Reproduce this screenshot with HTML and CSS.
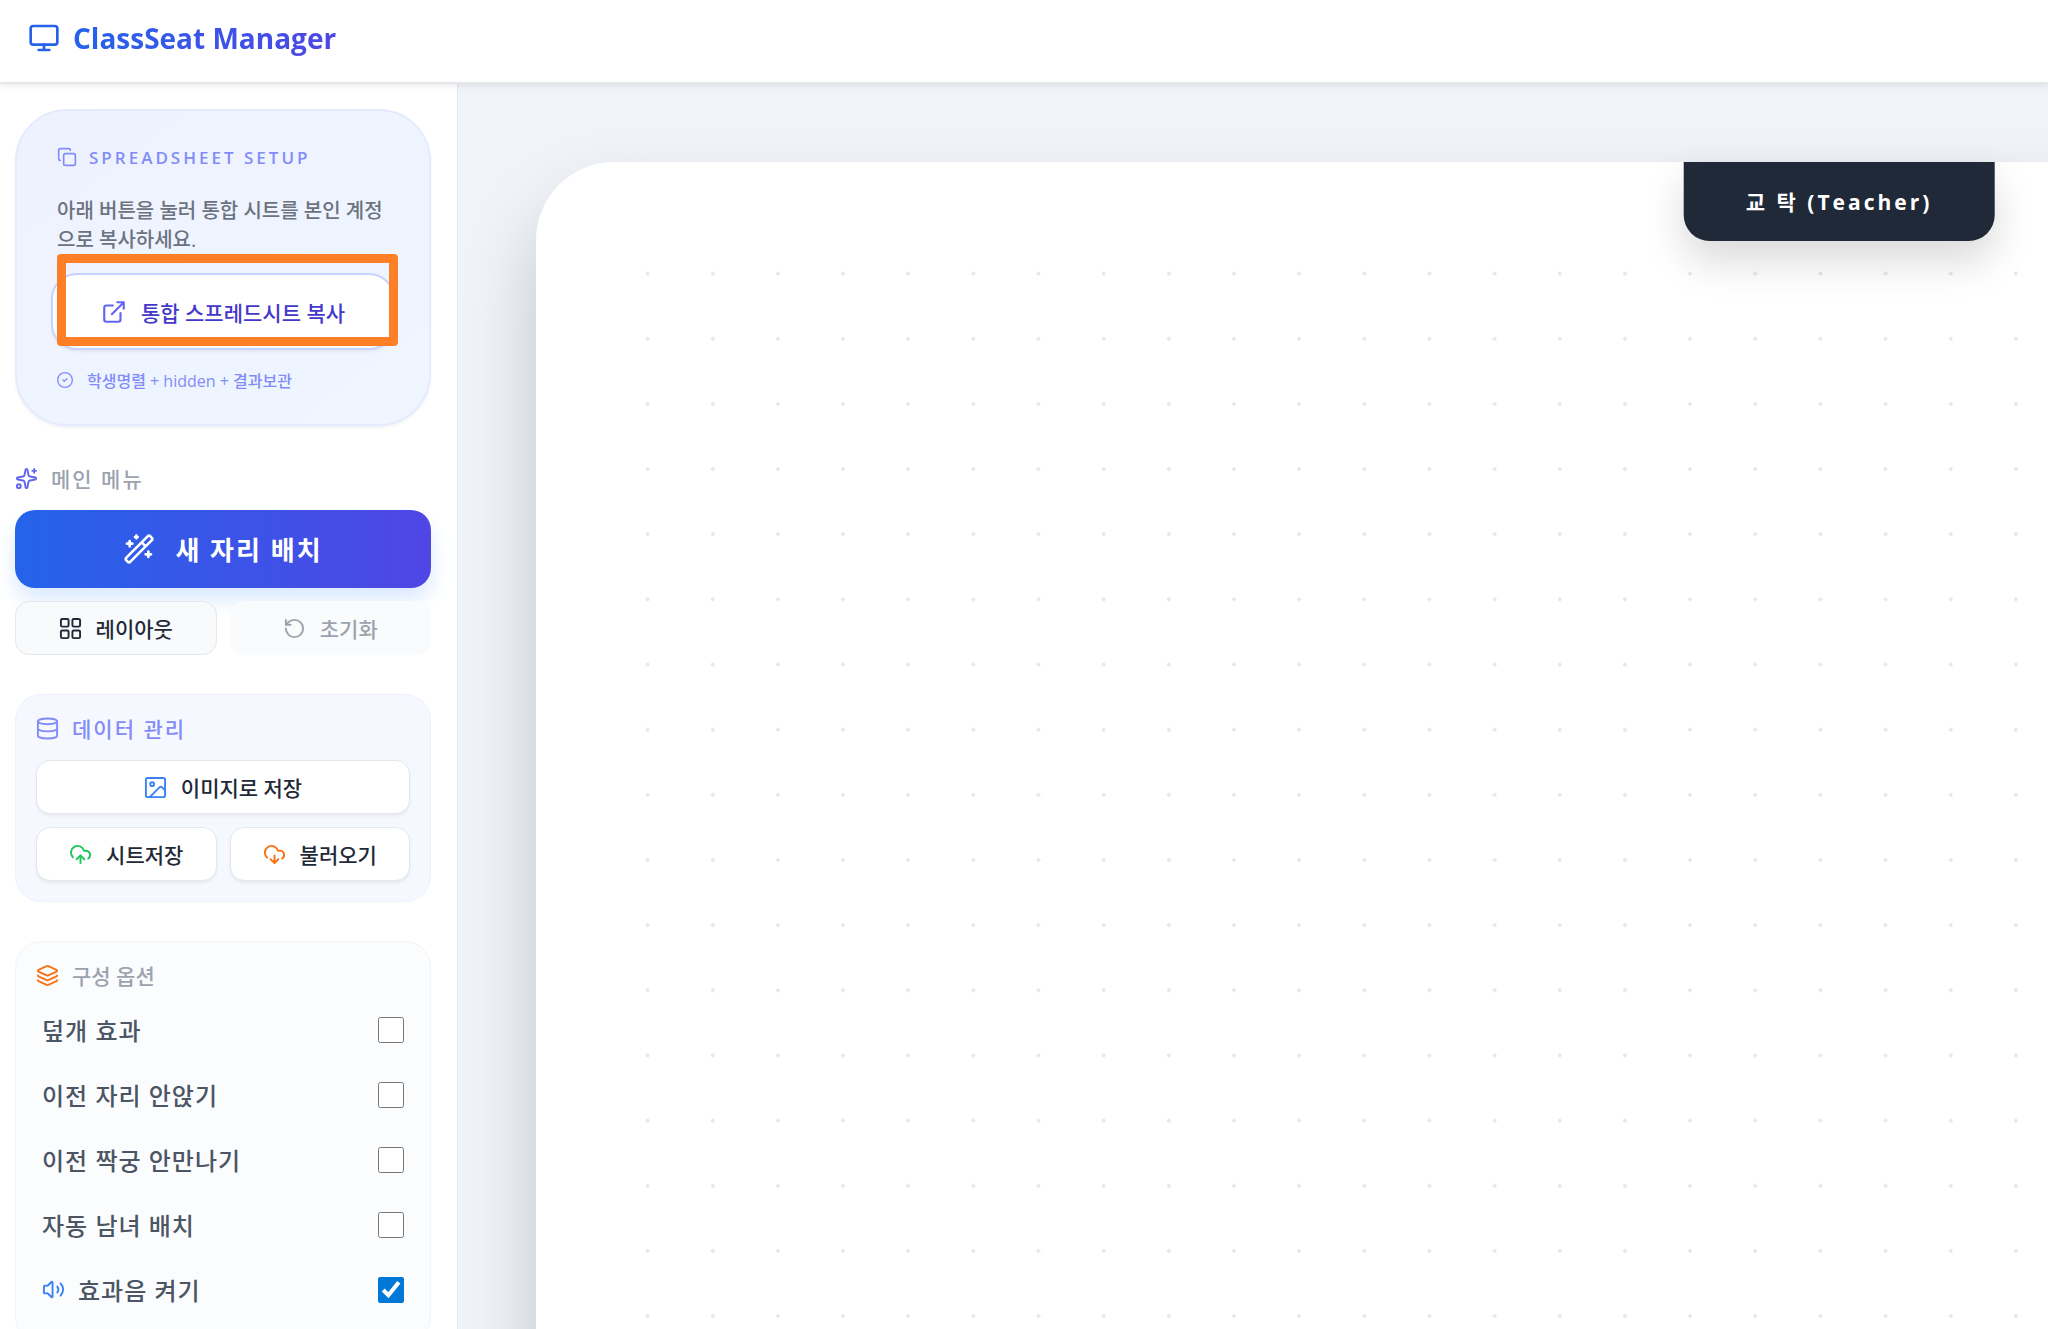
FILE: index.html
```html
<!DOCTYPE html>
<html lang="ko">
<head>
    <meta charset="UTF-8">
    <meta name="viewport" content="width=device-width, initial-scale=1.0">
    <title>ClassSeat Manager</title>
    <link rel="stylesheet" href="styles.css">
</head>
<body>
    <header class="header">
        <svg class="icon icon-logo" viewBox="0 0 24 24"><rect x="2" y="3" width="20" height="14" rx="2"/><path d="M8 21h8M12 17v4"/></svg>
        <h1 class="title">ClassSeat Manager</h1>
    </header>

    <div class="layout">
        <aside class="sidebar">
            <section class="setup-card">
                <h2 class="setup-title">
                    <svg class="icon icon-sm" viewBox="0 0 24 24"><rect x="8" y="8" width="14" height="14" rx="2"/><path d="M4 16c-1.1 0-2-.9-2-2V4c0-1.1.9-2 2-2h10c1.1 0 2 .9 2 2"/></svg>
                    SPREADSHEET SETUP
                </h2>
                <p class="setup-text">아래 버튼을 눌러 통합 시트를 본인 계정으로 복사하세요.</p>
                <div class="copy-wrap">
                    <button class="copy-button" type="button">
                        <svg class="icon icon-lg" viewBox="0 0 24 24"><path d="M15 3h6v6M10 14 21 3M18 13v6a2 2 0 0 1-2 2H5a2 2 0 0 1-2-2V8a2 2 0 0 1 2-2h6"/></svg>
                        통합 스프레드시트 복사
                    </button>
                    <div class="highlight"></div>
                </div>
                <p class="setup-note">
                    <svg class="icon icon-xs" viewBox="0 0 24 24"><circle cx="12" cy="12" r="11"/><path d="m9 12 2 2 4-4"/></svg>
                    학생명렬 + hidden + 결과보관
                </p>
            </section>

            <section class="menu">
                <h2 class="section-title">
                    <svg class="icon icon-md icon-indigo" viewBox="0 0 24 24"><path d="M11.017 2.814a1 1 0 0 1 1.966 0l1.051 5.558a2 2 0 0 0 1.594 1.594l5.558 1.051a1 1 0 0 1 0 1.966l-5.558 1.051a2 2 0 0 0-1.594 1.594l-1.051 5.558a1 1 0 0 1-1.966 0l-1.051-5.558a2 2 0 0 0-1.594-1.594l-5.558-1.051a1 1 0 0 1 0-1.966l5.558-1.051a2 2 0 0 0 1.594-1.594z"/><path d="M20 2v4M22 4h-4"/><circle cx="4" cy="20" r="2"/></svg>
                    메인 메뉴
                </h2>
                <button class="primary-button" type="button">
                    <svg class="icon icon-xl" viewBox="0 0 24 24"><path d="m21.64 3.64-1.28-1.28a1.21 1.21 0 0 0-1.72 0L2.36 18.64a1.21 1.21 0 0 0 0 1.72l1.28 1.28a1.2 1.2 0 0 0 1.72 0L21.64 5.36a1.2 1.2 0 0 0 0-1.72M14 7l3 3M5 6v4M19 14v4M10 2v2M7 8H3M21 16h-4M11 3H9"/></svg>
                    새 자리 배치
                </button>
                <div class="button-row">
                    <button class="button button-plain" type="button">
                        <svg class="icon icon-md" viewBox="0 0 24 24"><rect x="2" y="2" width="8" height="8" rx="1.5"/><rect x="14" y="2" width="8" height="8" rx="1.5"/><rect x="14" y="14" width="8" height="8" rx="1.5"/><rect x="2" y="14" width="8" height="8" rx="1.5"/></svg>
                        레이아웃
                    </button>
                    <button class="button button-reset" type="button">
                        <svg class="icon icon-md" viewBox="0 0 24 24"><path d="M3 12a9 9 0 1 0 9-9 9.75 9.75 0 0 0-6.74 2.74L3 8"/><path d="M3 3v5h5"/></svg>
                        초기화
                    </button>
                </div>
            </section>

            <section class="card card-data">
                <h2 class="section-title title-indigo">
                    <svg class="icon icon-md" viewBox="0 0 24 24"><ellipse cx="12" cy="4.5" rx="10" ry="3"/><path d="M2 4.5v15c0 1.7 4.5 3 10 3s10-1.3 10-3v-15M2 12c0 1.7 4.5 3 10 3s10-1.3 10-3"/></svg>
                    데이터 관리
                </h2>
                <button class="button button-white" type="button">
                    <svg class="icon icon-md icon-blue" viewBox="0 0 24 24"><rect x="2" y="2" width="20" height="20" rx="2"/><circle cx="8.5" cy="8.5" r="2"/><path d="m22 15-3.1-3.1a2 2 0 0 0-2.8 0L6 22"/></svg>
                    이미지로 저장
                </button>
                <div class="button-row">
                    <button class="button button-white" type="button">
                        <svg class="icon icon-md icon-green" viewBox="0 0 24 24"><path d="M12 13v8"/><path d="M4 14.9A7 7 0 1 1 15.71 8h1.79a4.5 4.5 0 0 1 2.5 8.24"/><path d="m8 17 4-4 4 4"/></svg>
                        시트저장
                    </button>
                    <button class="button button-white" type="button">
                        <svg class="icon icon-md icon-orange" viewBox="0 0 24 24"><path d="M12 13v8l-4-4M12 21l4-4"/><path d="M4.39 15.27A7 7 0 1 1 15.71 8h1.79a4.5 4.5 0 0 1 2.44 8.29"/></svg>
                        불러오기
                    </button>
                </div>
            </section>

            <section class="card card-options">
                <h2 class="section-title title-tight">
                    <svg class="icon icon-md icon-orange" viewBox="0 0 24 24"><path d="M12.83 2.18a2 2 0 0 0-1.66 0L2.6 6.08a1 1 0 0 0 0 1.83l8.58 3.91a2 2 0 0 0 1.66 0l8.58-3.9a1 1 0 0 0 0-1.83z"/><path d="M2 12a1 1 0 0 0 .58.91l8.6 3.91a2 2 0 0 0 1.65 0l8.58-3.9A1 1 0 0 0 22 12"/><path d="M2 17a1 1 0 0 0 .58.91l8.6 3.91a2 2 0 0 0 1.65 0l8.58-3.9A1 1 0 0 0 22 17"/></svg>
                    구성 옵션
                </h2>
                <label class="option">덮개 효과 <input type="checkbox"></label>
                <label class="option">이전 자리 안앉기 <input type="checkbox"></label>
                <label class="option">이전 짝궁 안만나기 <input type="checkbox"></label>
                <label class="option">자동 남녀 배치 <input type="checkbox"></label>
                <label class="option">
                    <span class="option-name">
                        <svg class="icon icon-md icon-blue" viewBox="0 0 24 24"><path d="M11 4.7a.7.7 0 0 0-1.2-.5L6.4 7.6A1.4 1.4 0 0 1 5.4 8H3a1 1 0 0 0-1 1v6a1 1 0 0 0 1 1h2.4a1.4 1.4 0 0 1 1 .4l3.4 3.4a.7.7 0 0 0 1.2-.5zM16 9a5 5 0 0 1 0 6M19.4 18.4a9 9 0 0 0 0-12.7"/></svg>
                        효과음 켜기
                    </span>
                    <input type="checkbox" checked>
                </label>
            </section>
        </aside>

        <main class="main">
            <div class="board">
                <div class="teacher">교 탁 (Teacher)</div>
                <div class="seats"></div>
            </div>
        </main>
    </div>
</body>
</html>
```
FILE: styles.css
```css
* {
    box-sizing: border-box;
}
body {
    display: flex;
    flex-direction: column;
    height: 100vh;
    margin: 0;
    overflow: hidden;
    font-family: "Open Sans", "Noto Sans CJK KR", sans-serif;
    font-weight: 500;
    color: #1f2937;
    background-color: #f0f4f8;
}
h1, h2, p {
    margin: 0;
}
button {
    font-family: inherit;
    font-weight: inherit;
    cursor: pointer;
}

/* Icons */
.icon {
    flex: none;
    fill: none;
    stroke: currentColor;
    stroke-width: 2;
    stroke-linecap: round;
    stroke-linejoin: round;
}
.icon-xs {
    width: 16px;
    height: 16px;
}
.icon-sm {
    width: 20px;
    height: 20px;
}
.icon-md {
    width: 23px;
    height: 23px;
}
.icon-lg {
    width: 26px;
    height: 26px;
}
.icon-xl {
    width: 32px;
    height: 32px;
}
.icon-logo {
    width: 32px;
    height: 32px;
    color: #2563eb;
}
.icon-indigo { color: #6366f1; }
.icon-blue { color: #3b82f6; }
.icon-green { color: #22c55e; }
.icon-orange { color: #f97316; }

/* Header */
.header {
    position: relative;
    z-index: 1;
    display: flex;
    flex: none;
    align-items: center;
    gap: 13px;
    height: 84px;
    padding: 0 28px 6px;
    background-color: #fff;
    border-bottom: 2px solid #e5e7eb;
    box-shadow: 0 2px 5px rgba(0, 0, 0, 0.08);
}
.title {
    font-size: 28px;
    font-weight: 700;
    line-height: 40px;
    color: transparent;
    background: linear-gradient(to right, #2563eb, #4f46e5);
    -webkit-background-clip: text;
    background-clip: text;
}

.layout {
    display: flex;
    flex: 1;
    min-height: 0;
}

/* Sidebar */
.sidebar {
    display: flex;
    flex: none;
    flex-direction: column;
    gap: 39px;
    width: 458px;
    padding: 25px 26px 25px 15px;
    overflow: hidden;
    background-color: #fff;
    border-right: 1px solid #e2e8f0;
}
.setup-card {
    flex: none;
    padding: 32px 40px;
    background: linear-gradient(to bottom right, #eef2ff, #eff6ff);
    border: 2px solid #e5eafe;
    border-radius: 52px;
    box-shadow: 0 2px 3px rgba(0, 0, 0, 0.05);
}
.setup-title {
    display: flex;
    align-items: center;
    gap: 12px;
    height: 28px;
    font-size: 17px;
    font-weight: 600;
    letter-spacing: 3px;
    color: #818cf8;
}
.setup-text {
    margin-top: 25px;
    font-size: 20px;
    line-height: 29px;
    word-break: break-all;
    color: #6b7280;
}
.copy-wrap {
    position: relative;
    margin: 19px -6px 0;
}
.copy-button {
    display: flex;
    align-items: center;
    justify-content: center;
    gap: 14px;
    width: 100%;
    height: 77px;
    font-size: 21px;
    color: #4338ca;
    background-color: #fff;
    border: 2px solid #c7d2fe;
    border-radius: 26px;
    box-shadow: 0 2px 3px rgba(0, 0, 0, 0.05);
}
.copy-button .icon {
    color: #6366f1;
}
.highlight {
    position: absolute;
    top: -19px;
    right: -3px;
    bottom: 4px;
    left: 6px;
    border: 9px solid #ff7f27;
    border-radius: 4px;
    pointer-events: none;
}
.setup-note {
    display: flex;
    align-items: center;
    gap: 14px;
    height: 24px;
    margin-top: 18px;
    font-size: 16px;
    color: #818cf8;
}

.section-title {
    display: flex;
    align-items: center;
    gap: 13px;
    height: 26px;
    font-size: 21px;
    font-weight: 500;
    letter-spacing: 2px;
    color: #9ca3af;
}
.title-indigo {
    color: #818cf8;
}
.title-tight {
    letter-spacing: 0;
}

.menu {
    display: flex;
    flex: none;
    flex-direction: column;
    gap: 13px;
}
.menu .section-title {
    margin-bottom: 6px;
}
.primary-button {
    display: flex;
    align-items: center;
    justify-content: center;
    gap: 20px;
    height: 78px;
    font-size: 26px;
    font-weight: 700;
    letter-spacing: 2px;
    color: #fff;
    background: linear-gradient(to right, #2563eb, #4f46e5);
    border: 0;
    border-radius: 20px;
    box-shadow: 0 12px 20px #dbeafe;
}
.button-row {
    display: grid;
    grid-template-columns: 1fr 1fr;
    gap: 13px;
}
.button {
    display: flex;
    align-items: center;
    justify-content: center;
    gap: 14px;
    height: 54px;
    padding: 0;
    font-size: 21px;
    color: #1f2937;
    border: 1px solid #e5e7eb;
    border-radius: 14px;
}
.button-plain {
    background-color: #f9fafb;
}
.button-reset {
    color: #9ca3af;
    background-color: #fafbfc;
    border-color: #fafbfc;
}
.button-white {
    background-color: #fff;
    box-shadow: 0 2px 3px rgba(0, 0, 0, 0.06);
}

.card {
    display: flex;
    flex: none;
    flex-direction: column;
    gap: 13px;
    padding: 20px;
    border: 1px solid #f3f4f6;
    border-radius: 26px;
}
.card .section-title {
    margin-bottom: 6px;
}
.card-data {
    background-color: #f6f8ff;
    border-color: #eef0ff;
}
.card-options {
    gap: 0;
    background-color: #fbfcfe;
}
.card-options .section-title {
    margin-bottom: 9px;
}
.option {
    display: flex;
    align-items: center;
    justify-content: space-between;
    height: 65px;
    padding: 0 6px;
    font-size: 24px;
    letter-spacing: 1px;
    color: #4b5563;
    cursor: pointer;
}
.option-name {
    display: flex;
    align-items: center;
    gap: 13px;
}
.option input {
    width: 26px;
    height: 26px;
    margin: 0;
    accent-color: #0078d7;
}

/* Seat board */
.main {
    flex: 1;
    min-width: 0;
    padding: 78px;
    overflow: hidden;
}
.board {
    position: relative;
    width: 2606px;
    padding: 79px 51px 78px 79px;
    background-color: #fff;
    border-radius: 78px;
    box-shadow: 0 40px 80px -10px rgba(0, 0, 0, 0.25);
}
.teacher {
    position: absolute;
    top: 0;
    left: 50%;
    padding: 23px 62px 22px;
    font-size: 21px;
    font-weight: 700;
    line-height: 34px;
    letter-spacing: 3px;
    white-space: nowrap;
    color: #fff;
    background-color: #1f2937;
    border-radius: 0 0 26px 26px;
    box-shadow: 0 20px 40px rgba(0, 0, 0, 0.15);
    transform: translateX(-50%);
}
.seats {
    height: 1955px;
    background-image: radial-gradient(#e2e8f0 2px, transparent 2px);
    background-repeat: round;
    background-size: 65px 65px;
}
```
